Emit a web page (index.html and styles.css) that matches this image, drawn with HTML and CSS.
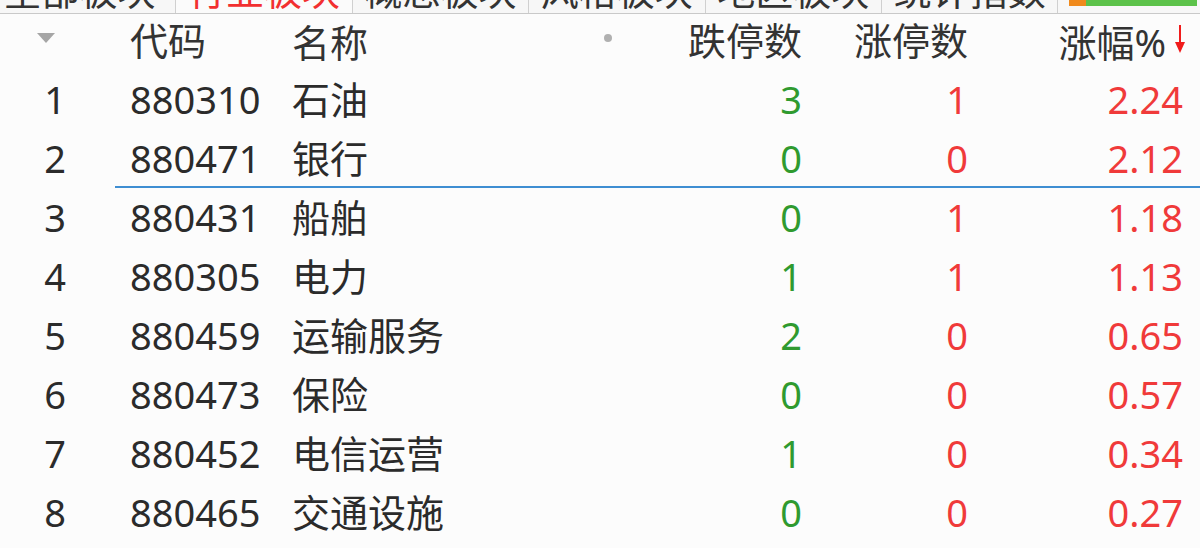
FILE: index.html
```html
<!DOCTYPE html>
<html lang="zh-CN">
<head>
<meta charset="utf-8">
<title>行业板块</title>
<link rel="stylesheet" href="styles.css">
</head>
<body>
<div class="screen">
  <div class="tabs">
    <div class="tab first">全部板块</div>
    <div class="tab active">行业板块</div>
    <div class="tab">概念板块</div>
    <div class="tab">风格板块</div>
    <div class="tab">地区板块</div>
    <div class="tab">统计指数</div>
    <div class="tab-bar"><span class="bar-up"></span><span class="bar-down"></span></div>
  </div>
  <div class="grid">
    <div class="row head">
      <div class="c-idx"><span class="tri"></span></div>
      <div class="c-code">代码</div>
      <div class="c-name">名称<span class="dot"></span></div>
      <div class="c-num">跌停数</div>
      <div class="c-num">涨停数</div>
      <div class="c-pct">涨幅%<svg class="arrow" width="12" height="30" viewBox="0 0 12 30"><path d="M6 1V21" stroke="#f01c1c" stroke-width="2"/><path d="M1 18L6 29L11 18Z" fill="#f01c1c"/></svg></div>
    </div>
    <div class="row"><div class="c-idx">1</div><div class="c-code">880310</div><div class="c-name">石油</div><div class="c-num g">3</div><div class="c-num r">1</div><div class="c-pct r">2.24</div></div>
    <div class="row mark"><div class="c-idx">2</div><div class="c-code">880471</div><div class="c-name">银行</div><div class="c-num g">0</div><div class="c-num r">0</div><div class="c-pct r">2.12</div></div>
    <div class="row"><div class="c-idx">3</div><div class="c-code">880431</div><div class="c-name">船舶</div><div class="c-num g">0</div><div class="c-num r">1</div><div class="c-pct r">1.18</div></div>
    <div class="row"><div class="c-idx">4</div><div class="c-code">880305</div><div class="c-name">电力</div><div class="c-num g">1</div><div class="c-num r">1</div><div class="c-pct r">1.13</div></div>
    <div class="row"><div class="c-idx">5</div><div class="c-code">880459</div><div class="c-name">运输服务</div><div class="c-num g">2</div><div class="c-num r">0</div><div class="c-pct r">0.65</div></div>
    <div class="row"><div class="c-idx">6</div><div class="c-code">880473</div><div class="c-name">保险</div><div class="c-num g">0</div><div class="c-num r">0</div><div class="c-pct r">0.57</div></div>
    <div class="row"><div class="c-idx">7</div><div class="c-code">880452</div><div class="c-name">电信运营</div><div class="c-num g">1</div><div class="c-num r">0</div><div class="c-pct r">0.34</div></div>
    <div class="row"><div class="c-idx">8</div><div class="c-code">880465</div><div class="c-name">交通设施</div><div class="c-num g">0</div><div class="c-num r">0</div><div class="c-pct r">0.27</div></div>
  </div>
</div>
</body>
</html>
```

FILE: styles.css
```css
* { box-sizing: border-box; }
html, body { margin: 0; padding: 0; }
body {
  width: 1200px;
  height: 548px;
  overflow: hidden;
  background: #fcfcfc;
  font-family: "Noto Sans", "Noto Sans CJK SC", sans-serif;
  font-size: 38px;
  color: #2b2b2b;
}
.screen { width: 1200px; height: 548px; overflow: hidden; }

.tabs {
  display: flex;
  height: 14px;
  overflow: hidden;
  border-bottom: 1px solid #c9c9c9;
  background: #f7f7f7;
}
.tab {
  flex: 0 0 176.4px;
  text-align: center;
  line-height: 38px;
  margin-top: -29px;
  height: 43px;
  border-right: 1px solid #d0d0d0;
  color: #333;
  white-space: nowrap;
}
.tab.first { text-align: right; padding-right: 20px; }
.tab.active { color: #f23030; background: #fbfbfb; }
.tab-bar {
  display: flex;
  margin-left: 11px;
  width: 128px;
  height: 6px;
}
.bar-up { width: 17px; background: #f08a1c; }
.bar-down { flex: 1; background: #5cc24a; }

.grid { display: flex; flex-direction: column; }
.row {
  position: relative;
  display: grid;
  grid-template-columns: 130px 162px 344px 166px 166px 215px;
  height: 59px;
  line-height: 59px;
  white-space: nowrap;
}
.row.head { height: 56px; line-height: 52px; color: #333; }
.row.mark::after {
  content: "";
  position: absolute;
  left: 115px;
  right: 0;
  bottom: 0;
  height: 2px;
  background: #3f8ed2;
}
.c-idx { text-align: center; padding-right: 20px; }
.head .c-idx { text-align: left; padding-left: 37px; }
.tri {
  display: inline-block;
  width: 0;
  height: 0;
  border-left: 9px solid transparent;
  border-right: 9px solid transparent;
  border-top: 10px solid #a6a6a6;
  vertical-align: 12px;
}
.c-name { display: flex; justify-content: space-between; align-items: center; padding-right: 24px; }
.dot {
  width: 8px;
  height: 8px;
  border-radius: 50%;
  background: #b0b0b0;
  margin-top: -8px;
}
.c-num, .c-pct { text-align: right; }
.head .c-pct { display: flex; justify-content: flex-end; align-items: center; margin-right: -3px; }
.arrow { margin-left: 8px; margin-top: -6px; }
.g { color: #2f9a2f; }
.r { color: #f03a3a; }
```
